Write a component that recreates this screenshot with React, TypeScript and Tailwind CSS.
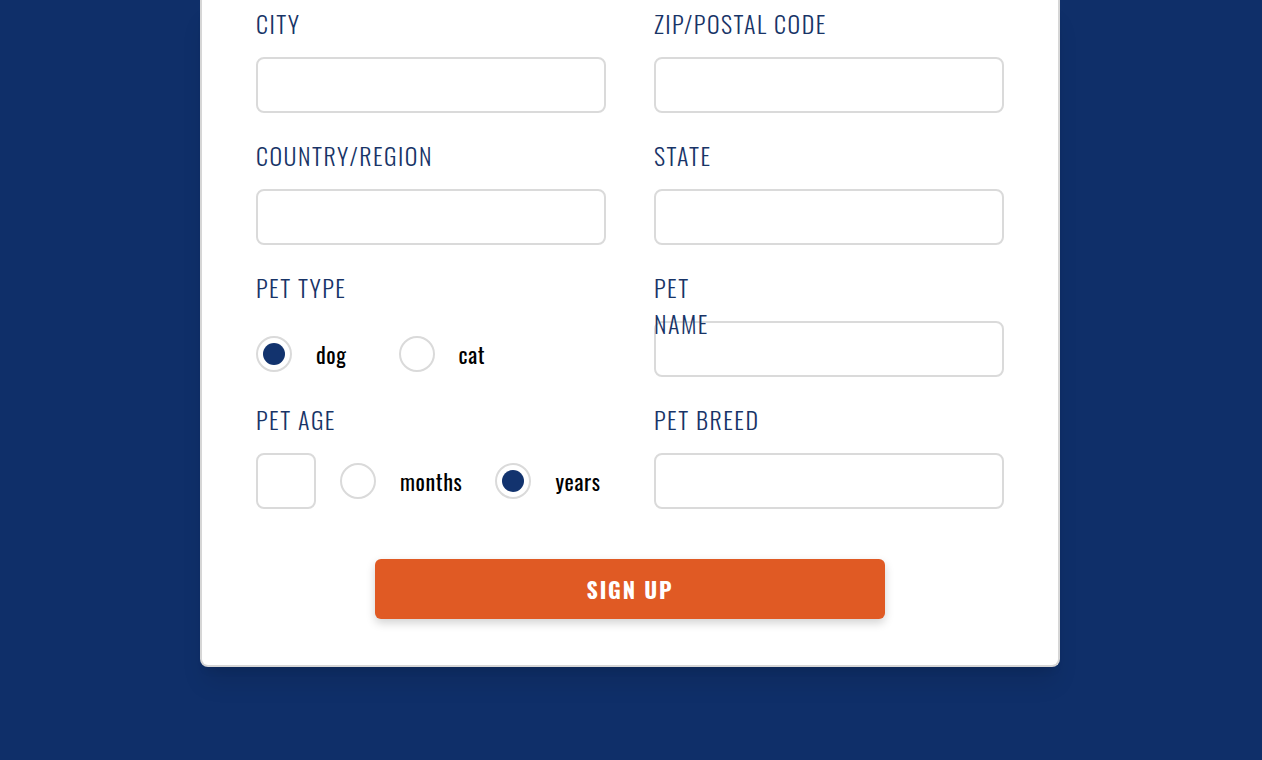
import React from "react";

const labelFont = {
	fontFamily: '"Oswald", "Liberation Sans Narrow", "DejaVu Sans Condensed", "Roboto", sans-serif',
};

function Label({ children, narrow }: { children: React.ReactNode; narrow?: boolean }) {
	return (
		<div
			className={`relative z-10 mb-4 h-9 text-[24px] leading-9 font-light tracking-[1.5px] text-[#183467] ${narrow ? "w-min" : ""}`}
		>
			{children}
		</div>
	);
}

function TextInput({ className = "w-full" }: { className?: string }) {
	return (
		<input
			type="text"
			className={`block h-14 rounded-lg border-2 border-[#dadada] bg-transparent px-3 text-lg outline-none ${className}`}
		/>
	);
}

function Radio({ checked, label, className = "" }: { checked?: boolean; label: string; className?: string }) {
	return (
		<label className={`flex items-center ${className}`}>
			<span className="flex h-9 w-9 shrink-0 items-center justify-center rounded-full border-2 border-[#dadada]">
				{checked && <span className="h-[22px] w-[22px] rounded-full bg-[#12336e]" />}
			</span>
			<span className="ml-6 text-[22px] tracking-[0.6px] text-black">{label}</span>
		</label>
	);
}

function Field({ label, narrow }: { label: string; narrow?: boolean }) {
	return (
		<div>
			<Label narrow={narrow}>{label}</Label>
			<TextInput />
		</div>
	);
}

export default function App() {
	return (
		<div className="min-h-[760px] bg-[#0f2f69]" style={labelFont}>
			<div className="mx-auto w-[860px] -translate-x-px rounded-b-lg border-2 border-t-0 border-[#d6d6d6] bg-white px-[54px] pt-[5px] pb-[46px] shadow-xl">
				<div className="grid grid-cols-2 gap-x-12 gap-y-6">
					<Field label="CITY" />
					<Field label="ZIP/POSTAL CODE" />
					<Field label="COUNTRY/REGION" />
					<Field label="STATE" />

					{/* Pet type */}
					<div>
						<Label>PET TYPE</Label>
						<div className="flex h-14 items-center pt-[10px]">
							<Radio checked label="dog" />
							<Radio label="cat" className="ml-[52px]" />
						</div>
					</div>
					<Field label="PET NAME" narrow />

					{/* Pet age */}
					<div>
						<Label>PET AGE</Label>
						<div className="flex h-14 items-center">
							<TextInput className="w-[60px]" />
							<Radio label="months" className="ml-6" />
							<Radio checked label="years" className="ml-[33px]" />
						</div>
					</div>
					<Field label="PET BREED" />
				</div>

				<button
					type="button"
					className="mx-auto mt-[50px] block h-[60px] w-[510px] rounded-md bg-[#e05a24] text-[22px] font-bold tracking-[1.8px] text-white shadow-[0_4px_10px_rgba(0,0,0,0.18)]"
				>
					SIGN UP
				</button>
			</div>
		</div>
	);
}
